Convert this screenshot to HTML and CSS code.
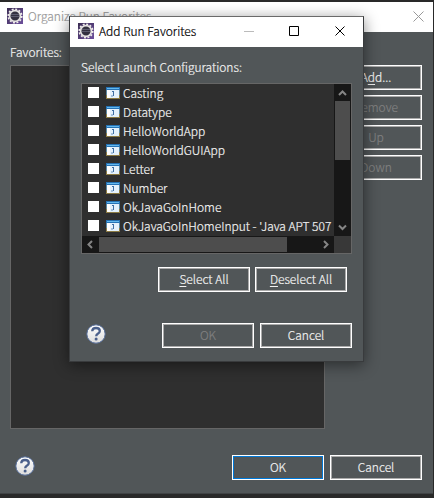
FILE: index.html
```html
<!DOCTYPE html>
<html lang="en">
<head>
<meta charset="utf-8">
<title>Organize Run Favorites</title>
<link rel="stylesheet" href="styles.css">
</head>
<body>
<svg class="defs" aria-hidden="true">
  <defs>
    <linearGradient id="purple" x1="0" y1="0" x2="1" y2="1"><stop offset="0" stop-color="#3a2c52"/><stop offset="1" stop-color="#6d4f9c"/></linearGradient>
    <linearGradient id="orb" x1="0" y1="0" x2="0" y2="1"><stop offset="0" stop-color="#ffffff"/><stop offset="1" stop-color="#dcdcdc"/></linearGradient>
    <symbol id="gear" viewBox="0 0 16 16">
      <rect width="16" height="16" fill="url(#purple)"/>
      <circle cx="8" cy="8" r="6.8" fill="none" stroke="#f0eeec" stroke-width="1.6" stroke-dasharray="2 1.56"/>
      <circle cx="8" cy="8" r="5.4" fill="#33303f" stroke="#e6e3e2" stroke-width="1.7"/>
      <path d="M4 6.5h8M3.800 8.500h8.400" stroke="#67677a" stroke-width=".8"/>
    </symbol>
    <symbol id="japp" viewBox="0 0 14 12">
      <rect width="14" height="12" fill="#8c7b43"/>
      <rect width="14" height="3" fill="#2672b4"/>
      <rect x="1" y="1" width="12" height="1" fill="#62b8ee"/>
      <rect x="0" y="3" width="1" height="5" fill="#5c87a0"/>
      <rect x="13" y="3" width="1" height="5" fill="#5c87a0"/>
      <rect x="1" y="3" width="12" height="8" fill="#e4f1fc"/>
      <rect x="1" y="3" width="3" height="8" fill="#fff"/>
      <path d="M6 4h2v5H7V5H6z" fill="#3f6fa4"/>
      <path d="M5 8.500h2v1H5z" fill="#6b93bd"/>
    </symbol>
    <symbol id="help" viewBox="0 0 20 20">
      <circle cx="10" cy="10" r="9.2" fill="url(#orb)" stroke="#536b98" stroke-width="1"/>
      <path d="M6.200 7.200Q6.400 4 10 4q3.800 0 3.800 2.900 0 1.600-2 2.800-1.600 1-1.600 2.600" fill="none" stroke="#4b608b" stroke-width="2.300"/>
      <circle cx="10.100" cy="15" r="1.500" fill="#4b608b"/>
    </symbol>
  </defs>
</svg>
<main class="window">
  <header class="titlebar">
    <svg class="gear"><use href="#gear"/></svg>
    <span class="title">Organize Run Favorites</span>
    <svg class="close" viewBox="0 0 11 11"><path d="M.5.5l10 10M10.5.5l-10 10"/></svg>
  </header>
  <div class="label"><span>Favorites:</span></div>
  <div class="middle">
    <div class="favorites"></div>
    <div class="side">
      <button>A<span class="key">d</span>d...</button>
      <button disabled>Remove</button>
      <button disabled>Up</button>
      <button disabled>Down</button>
    </div>
  </div>
  <footer class="footer">
    <svg class="help"><use href="#help"/></svg>
    <button class="primary">OK</button>
    <button>Cancel</button>
  </footer>
</main>
<section class="dialog">
  <header class="titlebar">
    <svg class="gear"><use href="#gear"/></svg>
    <span class="title">Add Run Favorites</span>
    <svg class="controls" viewBox="0 0 102 12"><path class="min" d="M0 6.5h10"/><path d="M45.5 1.5h9v9h-9z"/><path d="M91.500 1.500l9 9M100.500 1.500l-9 9"/></svg>
  </header>
  <div class="label"><span>Select Launch Configurations:</span></div>
  <div class="list">
    <ul class="rows">
      <li><i></i><svg><use href="#japp"/></svg><span>Casting</span></li>
      <li><i></i><svg><use href="#japp"/></svg><span>Datatype</span></li>
      <li><i></i><svg><use href="#japp"/></svg><span>HelloWorldApp</span></li>
      <li><i></i><svg><use href="#japp"/></svg><span>HelloWorldGUIApp</span></li>
      <li><i></i><svg><use href="#japp"/></svg><span>Letter</span></li>
      <li><i></i><svg><use href="#japp"/></svg><span>Number</span></li>
      <li><i></i><svg><use href="#japp"/></svg><span>OkJavaGoInHome</span></li>
      <li><i></i><svg><use href="#japp"/></svg><span class="long">OkJavaGoInHomeInput - 'Java APT 507</span></li>
    </ul>
    <div class="vbar">
      <svg viewBox="0 0 17 17"><path d="M5 11l3.500-3.500L12 11"/></svg>
      <div class="thumb"></div>
      <svg viewBox="0 0 17 17"><path d="M5 6.500L8.500 10 12 6.500"/></svg>
    </div>
    <div class="hbar">
      <svg viewBox="0 0 17 17"><path d="M10 5L6.500 8.500 10 12"/></svg>
      <div class="thumb"></div>
      <svg viewBox="0 0 17 17"><path d="M7 5l3.500 3.500L7 12"/></svg>
    </div>
    <div class="corner"></div>
  </div>
  <div class="select">
    <button><span class="key">S</span>elect All</button>
    <button><span class="key">D</span>eselect All</button>
  </div>
  <footer class="footer">
    <svg class="help"><use href="#help"/></svg>
    <button disabled>OK</button>
    <button>Cancel</button>
  </footer>
</section>
</body>
</html>
```
FILE: styles.css
```css
* { box-sizing: border-box; }
body {
  position: relative;
  width: 434px;
  height: 498px;
  margin: 0;
  padding-top: 2px;
  overflow: hidden;
  background: #292929;
  color: #f2f2f2;
  font: 300 12px/18px "Noto Sans CJK KR", "Noto Sans", sans-serif;
  -webkit-text-stroke: .2px;
  white-space: nowrap;
}
svg { display: block; flex: none; }
.defs { position: absolute; width: 0; height: 0; }
.window {
  width: 433px;
  height: 492px;
  background: #515658;
  border-bottom: 1px solid #404345;
}
.titlebar {
  display: flex;
  align-items: center;
  height: 30px;
  padding: 0 0 2px 7px;
  background: #fff;
  color: #999;
}
.gear { width: 16px; height: 16px; margin-right: 5px; }
.close { width: 11px; height: 11px; margin: 0 9px 0 auto; fill: none; stroke: #999; }
.label { display: flex; align-items: center; height: 33px; padding: 7px 0 0 10px; }
.middle { display: flex; gap: 5px; padding-left: 10px; }
.favorites { width: 315px; height: 364px; background: #2f2f2f; border: 1px solid #666; }
.side { display: flex; flex-direction: column; gap: 5px; }
button {
  width: 92px;
  height: 25px;
  padding: 0 0 2px;
  border: 1px solid #fff;
  box-shadow: inset 0 0 0 1px #aaa;
  background: #515658;
  color: inherit;
  font: inherit;
  line-height: 21px;
}
button:disabled { color: #808080; }
.primary { box-shadow: inset 0 0 0 1px #0078d7; }
.key { text-decoration: underline; text-underline-offset: 2px; }
.footer { display: flex; gap: 6px; padding: 26px 11px 0 15px; }
.help { width: 20px; height: 20px; margin: 1px auto 0 0; }

.dialog {
  position: absolute;
  left: 69px;
  top: 16px;
  width: 295px;
  height: 346px;
  border: 1px solid #393b3d;
  border-top-color: #6a6a6a;
  background: #515658;
  box-shadow: 0 3px 14px rgba(0, 0, 0, .48);
}
.dialog .titlebar { padding-left: 8px; color: #000; }
.controls { width: 102px; height: 12px; margin: 0 17px 0 auto; fill: none; stroke: #000; }
.controls .min { stroke: #bbb; }
.dialog .label { height: 36px; padding: 4px 0 0 11px; }
.list {
  display: grid;
  grid-template: 152px 17px / 252px 17px;
  width: 271px;
  height: 171px;
  margin-left: 11px;
  border: 1px solid #666;
  background: #2f2f2f;
}
.rows { margin: 0; padding: 0; overflow: hidden; list-style: none; }
.rows li { display: flex; align-items: center; height: 19px; padding-left: 6px; }
.rows i { flex: none; width: 11px; height: 11px; margin: 0 7px 2px 0; background: #fff; }
.rows svg { width: 14px; height: 12px; margin: 0 3px 1px 0; }
.rows span { margin-bottom: 2px; }
.rows .long { letter-spacing: -.02px; }
.vbar { display: flex; flex-direction: column; justify-content: space-between; background: #171717; }
.vbar svg, .hbar svg { width: 17px; height: 17px; fill: none; stroke: #858585; stroke-width: 2; }
.vbar .thumb { width: 15px; height: 59px; margin: 0 1px 59px; background: #4d4d4d; }
.hbar { display: flex; justify-content: space-between; background: #171717; }
.hbar .thumb { width: 188px; height: 15px; margin: 1px 30px 1px 0; background: #4d4d4d; }
.corner { background: #383838; }
.select { display: flex; justify-content: flex-end; gap: 5px; padding: 13px 16px 0 0; }
.dialog .footer { padding: 31px 11px 0 16px; }
```
